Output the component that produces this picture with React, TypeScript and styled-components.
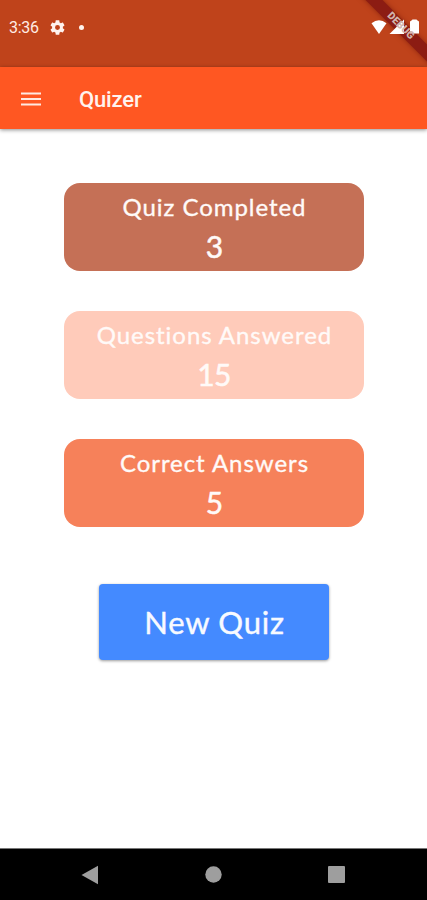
import React from "react";
import styled, { createGlobalStyle } from "styled-components";

const GlobalStyle = createGlobalStyle`
  *, *::before, *::after { box-sizing: border-box; }
  body { margin: 0; background: #fff; }
`;

const Screen = styled.div`
  position: relative;
  width: 427px;
  height: 900px;
  display: flex;
  flex-direction: column;
  overflow: hidden;
  background: #fff;
  font-family: Roboto, "Liberation Sans", sans-serif;
`;

const StatusBar = styled.div`
  flex: none;
  height: 67px;
  display: flex;
  align-items: flex-start;
  justify-content: space-between;
  padding: 17px 4px 0 9px;
  background: #bf431b;
  color: #ffece5;
`;

const StatusGroup = styled.div<{ $gap: number }>`
  position: relative;
  z-index: 2;
  height: 20px;
  display: flex;
  align-items: center;
  gap: ${(p) => p.$gap}px;
`;

const Clock = styled.span`
  width: 30px;
  font-size: 16px;
  line-height: 22px;
  letter-spacing: -0.3px;
  padding-top: 2px;
`;

const Dot = styled.span`
  width: 5px;
  height: 5px;
  margin-left: 3px;
  border-radius: 50%;
  background: #fff3ee;
`;

const DebugBanner = styled.div`
  position: absolute;
  z-index: 1;
  top: 20px;
  left: 338px;
  width: 124px;
  height: 12px;
  transform: rotate(45deg);
  background: #8c1c13;
  box-shadow: 0 0 5px rgba(90, 10, 0, 0.5);
`;

const DebugText = styled.div`
  position: absolute;
  z-index: 3;
  top: 20px;
  left: 339px;
  width: 124px;
  transform: rotate(45deg);
  color: #d2b5ae;
  font-size: 10.5px;
  font-weight: 900;
  line-height: 11px;
  text-align: center;
`;

const AppBar = styled.header`
  flex: none;
  position: relative;
  height: 62px;
  display: flex;
  align-items: center;
  gap: 38px;
  padding: 2px 0 0 21px;
  background: #ff5722;
  box-shadow: 0 1px 4px rgba(0, 0, 0, 0.45);
`;

const MenuButton = styled.button`
  width: 20px;
  padding: 0;
  border: 0;
  background: none;
`;

const Title = styled.h1`
  margin: 0;
  padding-top: 1px;
  color: #fff3ee;
  font-size: 22px;
  font-weight: 500;
  line-height: 26px;
  letter-spacing: -0.15px;
`;

const Content = styled.main`
  flex: 1;
  display: flex;
  flex-direction: column;
  align-items: center;
  padding: 54px 0 0 1px;
`;

const Card = styled.section<{ $color: string }>`
  width: 300px;
  height: 88px;
  margin-bottom: 40px;
  padding-top: 8px;
  border-radius: 16px;
  background: ${(p) => p.$color};
  color: #fffaf8;
  font-family: Lato, "Open Sans", sans-serif;
  font-weight: 400;
  text-align: center;
`;

const CardLabel = styled.div`
  font-size: 24px;
  line-height: 32px;
  letter-spacing: 0.95px;
  margin-right: -0.95px;
  white-space: nowrap;
  -webkit-text-stroke: 0.35px currentColor;
`;

const CardValue = styled.div`
  font-size: 30px;
  line-height: 46px;
  letter-spacing: -0.7px;
  -webkit-text-stroke: 0.5px currentColor;
`;

const NewQuizButton = styled.button`
  width: 230px;
  height: 76px;
  margin-top: 17px;
  padding: 0 0 0 1px;
  border: 0;
  border-radius: 4px;
  background: #448aff;
  box-shadow: 0 1px 3px rgba(0, 0, 0, 0.4);
  color: #f8faff;
  font-family: Lato, "Open Sans", sans-serif;
  font-size: 31px;
  letter-spacing: 0.75px;
  -webkit-text-stroke: 0.4px currentColor;
`;

const NavBar = styled.nav`
  flex: none;
  height: 52px;
  display: flex;
  justify-content: space-between;
  align-items: center;
  padding: 0 82px 0 81px;
  border-top: 1px solid #777;
  background: #000;
`;

const Icon = styled.svg`
  display: block;
  flex: none;
`;

const stats = [
  { label: "Quiz Completed", value: 3, color: "#c57056" },
  { label: "Questions Answered", value: 15, color: "#ffcbba" },
  { label: "Correct Answers", value: 5, color: "#f6815a" },
];

export default function App() {
  return (
    <>
      <GlobalStyle />
      <Screen>
        <StatusBar>
          <StatusGroup $gap={11}>
            <Clock>3:36</Clock>
            <Icon width="15" height="15" viewBox="2 2 20 20" fill="#fff3ee">
              <path
                fillRule="evenodd"
                d="M19.14 12.94c.04-.3.06-.61.06-.94 0-.32-.02-.64-.07-.94l2.03-1.58c.18-.14.23-.41.12-.61l-1.92-3.32c-.12-.22-.37-.29-.59-.22l-2.39.96c-.5-.38-1.03-.7-1.62-.94l-.36-2.54c-.04-.24-.24-.41-.48-.41h-3.84c-.24 0-.43.17-.47.41l-.36 2.54c-.59.24-1.13.57-1.62.94l-2.39-.96c-.22-.08-.47 0-.59.22L2.74 8.87c-.12.21-.08.47.12.61l2.03 1.58c-.05.3-.09.63-.09.94s.02.64.07.94l-2.03 1.58c-.18.14-.23.41-.12.61l1.92 3.32c.12.22.37.29.59.22l2.39-.96c.5.38 1.03.7 1.62.94l.36 2.54c.05.24.24.41.48.41h3.84c.24 0 .44-.17.47-.41l.36-2.54c.59-.24 1.13-.56 1.62-.94l2.39.96c.22.08.47 0 .59-.22l1.92-3.32c.12-.22.07-.47-.12-.61l-2.01-1.58zM12 15.3a3.3 3.3 0 1 1 0-6.6 3.3 3.3 0 0 1 0 6.6z"
              />
            </Icon>
            <Dot />
          </StatusGroup>
          <StatusGroup $gap={0}>
            <Icon width="52" height="20" viewBox="0 0 52 20" fill="#fff">
              <path d="M0.5 6.3Q8 0.2 15.5 6.3L8 17Z" />
              <path d="M33 2.5V17H18.5Z" />
              <path d="M39 4.4l1.5-.9 1-1h4l1 1 1.5.9v12.2h-9z" />
            </Icon>
          </StatusGroup>
        </StatusBar>
        <DebugBanner />
        <DebugText>DEBUG</DebugText>
        <AppBar>
          <MenuButton aria-label="Menu">
            <Icon width="20" height="14" viewBox="0 0 20 14" fill="#ffe9e1">
              <path d="M0 .4h20v2.2H0zM0 5.9h20v2.2H0zM0 11.4h20v2.2H0z" />
            </Icon>
          </MenuButton>
          <Title>Quizer</Title>
        </AppBar>
        <Content>
          {stats.map((s) => (
            <Card key={s.label} $color={s.color}>
              <CardLabel>{s.label}</CardLabel>
              <CardValue>{s.value}</CardValue>
            </Card>
          ))}
          <NewQuizButton>New Quiz</NewQuizButton>
        </Content>
        <NavBar>
          <Icon width="17" height="20" viewBox="0 0 17 20" fill="#9e9e9e">
            <path d="M.5 10 17 .8v18.4z" />
          </Icon>
          <Icon width="17" height="17" viewBox="0 0 17 17" fill="#9e9e9e">
            <circle cx="8.5" cy="8.5" r="8.2" />
          </Icon>
          <Icon width="17" height="17" viewBox="0 0 17 17" fill="#9e9e9e">
            <rect width="17" height="17" rx="1" />
          </Icon>
        </NavBar>
      </Screen>
    </>
  );
}
